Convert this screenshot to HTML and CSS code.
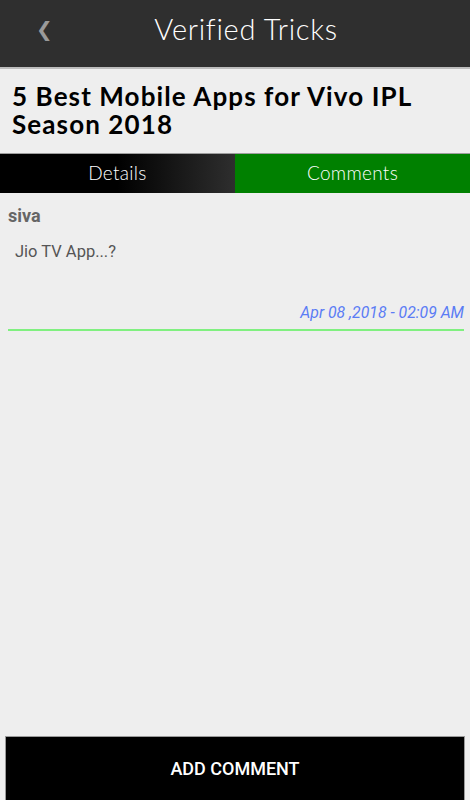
FILE: index.html
```html
<!DOCTYPE html>
<html lang="en">
<head>
    <meta charset="UTF-8">
    <meta name="viewport" content="width=device-width, initial-scale=1.0">
    <title>Verified Tricks</title>
    <link rel="stylesheet" href="styles.css">
</head>
<body>

<div class="app">
    <div class="header">
        <div class="back">&#10094;</div>
        <div class="header-title">Verified Tricks</div>
    </div>

    <h1 class="post-title">5 Best Mobile Apps for Vivo IPL Season 2018</h1>

    <div class="tabs">
        <div class="tab details">Details</div>
        <div class="tab active">Comments</div>
    </div>

    <div class="comments">
        <div class="comment">
            <div class="comment-user">siva</div>
            <div class="comment-text">Jio TV App...?</div>
            <div class="comment-date">Apr 08 ,2018 - 02:09 AM</div>
        </div>
    </div>

    <div class="footer">
        <div class="add-button">ADD COMMENT</div>
    </div>
</div>

</body>
</html>
```

FILE: styles.css
```css
body {
    margin: 0;
    padding: 0;
    background-color: #eeeeee;
    font-family: Roboto, "Liberation Sans", sans-serif;
}
.app {
    height: 800px;
    display: flex;
    flex-direction: column;
}
.header {
    height: 67px;
    background-color: #2f2f2f;
    border-bottom: 2px solid #bdbdbd;
    display: flex;
    align-items: center;
    position: relative;
}
.back {
    position: absolute;
    left: 36px;
    top: 17px;
    color: #9a9a9a;
    font-size: 20px;
    font-family: "DejaVu Sans", sans-serif;
}
.header-title {
    flex: 1;
    text-align: center;
    color: #ffffff;
    font-family: Lato, sans-serif;
    font-weight: 300;
    font-size: 29px;
    letter-spacing: 0.7px;
    padding-left: 22px;
    padding-bottom: 10px;
}
.post-title {
    margin: 0;
    padding: 13px 12px 15px;
    font-family: Lato, sans-serif;
    font-weight: 700;
    font-size: 26px;
    line-height: 28px;
    letter-spacing: 1.1px;
    color: #000000;
}
.tabs {
    display: flex;
    height: 39px;
    border-top: 1px solid #9e9e9e;
}
.tab {
    flex: 1;
    display: flex;
    align-items: center;
    justify-content: center;
    padding-bottom: 3px;
    color: #ffffff;
    font-family: Lato, sans-serif;
    font-weight: 300;
    font-size: 19px;
    letter-spacing: 0.3px;
}
.tab.details {
    background: linear-gradient(to right, #000000 0%, #000000 50%, #2e2e2e 100%);
}
.tab.active {
    background-color: #008000;
}
.comments {
    flex: 1;
    padding: 0 6px 0 8px;
}
.comment {
    border-bottom: 2px solid #80f080;
    padding-bottom: 7px;
}
.comment-user {
    margin-top: 12px;
    font-weight: 700;
    font-size: 18px;
    color: #666666;
}
.comment-text {
    margin-top: 16px;
    padding-left: 7px;
    font-size: 16.5px;
    color: #555555;
}
.comment-date {
    margin-top: 42px;
    text-align: right;
    font-style: italic;
    font-size: 15.8px;
    color: #5b7cf5;
}
.footer {
    padding: 0 5px;
}
.add-button {
    height: 63px;
    background-color: #000000;
    border: 1px solid #9a9a9a;
    border-bottom: none;
    color: #ffffff;
    font-size: 18px;
    font-weight: 500;
    display: flex;
    align-items: center;
    justify-content: center;
}
```
